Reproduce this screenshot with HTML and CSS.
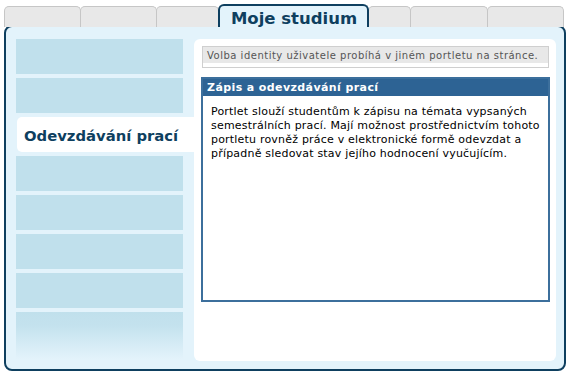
FILE: index.html
```html
<!DOCTYPE html>
<html lang="cs">
<head>
  <meta charset="UTF-8">
  <title>Moje studium</title>
  <link rel="stylesheet" href="styles.css">
</head>
<body>
  <div class="tabs">
    <div class="tab tab-1"></div>
    <div class="tab tab-2"></div>
    <div class="tab tab-3"></div>
    <div class="tab tab-active">Moje studium</div>
    <div class="tab tab-5"></div>
    <div class="tab tab-6"></div>
    <div class="tab tab-7"></div>
  </div>

  <div class="panel">
    <div class="menu">
      <div class="menu-item"></div>
      <div class="menu-item"></div>
      <div class="menu-item active">Odevzdávání prací</div>
      <div class="menu-item"></div>
      <div class="menu-item"></div>
      <div class="menu-item"></div>
      <div class="menu-item"></div>
      <div class="menu-item fade"></div>
    </div>

    <div class="content">
      <div class="notice">
        <p>Volba identity uživatele probíhá v jiném portletu na stránce.</p>
      </div>

      <div class="portlet">
        <div class="portlet-title">Zápis a odevzdávání prací</div>
        <div class="portlet-body">
          Portlet slouží studentům k zápisu na témata vypsaných
          semestrálních prací. Mají možnost prostřednictvím tohoto
          portletu rovněž práce v elektronické formě odevzdat a
          případně sledovat stav jejího hodnocení vyučujícím.
        </div>
      </div>
    </div>
  </div>
</body>
</html>
```

FILE: styles.css
```css
body {
  margin: 0;
  padding: 4px 5px 0 4px;
  background-color: #ffffff;
  font-family: "DejaVu Sans", Verdana, sans-serif;
}

.tabs {
  display: flex;
  align-items: flex-end;
  height: 23px;
  margin-bottom: -2px;
}

.tab {
  box-sizing: border-box;
  height: 21px;
  background-color: #e8e8e8;
  border: 1px solid #c6c6c6;
  border-bottom: none;
  border-radius: 5px 5px 0 0;
  margin-left: -1px;
}

.tab-1 { width: 77px; margin-left: 0; }
.tab-2 { width: 77px; }
.tab-3 { width: 63px; }
.tab-5 { width: 43px; }
.tab-6 { width: 78px; }
.tab-7 { width: 77px; }

.tab-active {
  position: relative;
  z-index: 1;
  width: 151px;
  height: 23px;
  background-color: #e3f3fb;
  border: 2px solid #0e3f5f;
  border-bottom: none;
  border-radius: 6px 6px 0 0;
  color: #0e3f5f;
  font-size: 16.5px;
  font-weight: bold;
  line-height: 25px;
  text-align: center;
  padding-left: 1px;
}

.panel {
  display: flex;
  width: 562px;
  height: 346px;
  box-sizing: border-box;
  padding: 12px 8px 8px 10px;
  background-color: #e3f3fb;
  border: 2px solid #0e3f5f;
  border-radius: 8px;
}

.menu {
  display: flex;
  flex-direction: column;
  gap: 4px;
  width: 167px;
  margin-right: 11px;
}

.menu-item {
  height: 35px;
  flex-shrink: 0;
  background-color: #c0e0ec;
}

.menu-item.active {
  margin: 0 -11px 0 1px;
  background-color: #ffffff;
  border-radius: 5px 0 0 5px;
  color: #0e3f5f;
  font-size: 14.8px;
  font-weight: bold;
  line-height: 37px;
  padding-left: 7px;
}

.menu-item.fade {
  height: 47px;
  background: linear-gradient(#c0e0ec, #c4e2ee 30%, #e3f3fb);
}

.content {
  width: 362px;
  box-sizing: border-box;
  padding: 7px 7px 0 8px;
  background-color: #ffffff;
  border-radius: 6px;
}

.notice {
  border: 1px solid #cfcfcf;
  padding-bottom: 4px;
}

.notice p {
  margin: 0;
  padding: 1px 4px 0;
  background-color: #e8e8e8;
  color: #555555;
  font-size: 10px;
  letter-spacing: 0.5px;
  line-height: 15px;
}

.portlet {
  height: 225px;
  box-sizing: border-box;
  margin: 9px -1px 0 -1px;
  border: 2px solid #3c6f9c;
}

.portlet-title {
  background-color: #2d6394;
  color: #ffffff;
  font-size: 11px;
  font-weight: bold;
  letter-spacing: 0.4px;
  line-height: 17px;
  padding-left: 4px;
}

.portlet-body {
  padding: 9px 8px 0 8px;
  font-size: 11px;
  letter-spacing: 0.2px;
  line-height: 14px;
  color: #000000;
}
```
